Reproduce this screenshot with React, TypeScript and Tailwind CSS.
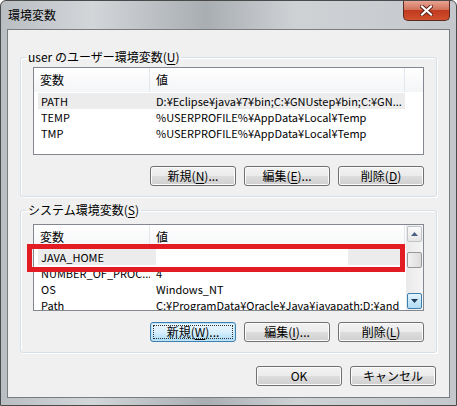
import React from 'react';

const FONT = { fontFamily: '"Noto Sans CJK JP", "Liberation Sans", sans-serif' };

interface Row {
  name: string;
  value: string;
  selected?: boolean;
  redacted?: boolean;
}

const USER_ROWS: Row[] = [
  { name: 'PATH', value: 'D:¥Eclipse¥java¥7¥bin;C:¥GNUstep¥bin;C:¥GN...', selected: true },
  { name: 'TEMP', value: '%USERPROFILE%¥AppData¥Local¥Temp' },
  { name: 'TMP', value: '%USERPROFILE%¥AppData¥Local¥Temp' },
];

const SYSTEM_ROWS: Row[] = [
  { name: 'JAVA_HOME', value: '', selected: true, redacted: true },
  { name: 'NUMBER_OF_PROC...', value: '4' },
  { name: 'OS', value: 'Windows_NT' },
  { name: 'Path', value: 'C:¥ProgramData¥Oracle¥Java¥javapath;D:¥and' },
];

function Label({ text, hot, tail }: { text: string; hot: string; tail?: string }) {
  return (
    <span>
      {text}(<span className="underline underline-offset-[2px]">{hot}</span>){tail}
    </span>
  );
}

function WinButton({ children, focused }: { children: React.ReactNode; focused?: boolean }) {
  if (focused) {
    return (
      <div className="w-[86px] h-[20px] rounded-[3px] border border-[#3c7fb1] bg-gradient-to-b from-[#eaf6fd] via-[#d9f0fc] to-[#a7d9f5] p-[2px] shadow-[inset_0_0_0_1px_#bfe3f7]">
        <div className="h-full w-full border border-dotted border-[#333] flex items-center justify-center text-[12px] leading-none text-black">
          {children}
        </div>
      </div>
    );
  }
  return (
    <div className="w-[86px] h-[20px] rounded-[3px] border border-[#707070] bg-[linear-gradient(to_bottom,#f2f2f2_0%,#ebebeb_50%,#dddddd_51%,#cfcfcf_100%)] shadow-[inset_0_0_0_1px_#fcfcfc] flex items-center justify-center text-[12px] leading-none text-black">
      {children}
    </div>
  );
}

function Header({ tall }: { tall?: boolean }) {
  return (
    <div className={`${tall ? 'h-[24px]' : 'h-[23px]'} flex bg-gradient-to-b from-white to-[#f4f5f7] text-[12px] text-black`}>
      <div className="h-full w-[116px] border-r border-[#e3e8ee] pl-[6px] flex items-center">変数</div>
      <div className="h-full w-[255px] border-r border-[#e3e8ee] pl-[6px] flex items-center">値</div>
      <div className="flex-1" />
    </div>
  );
}

function Rows({ rows }: { rows: Row[] }) {
  return (
    <div className="pt-[1px]">
      {rows.map(r => (
        <div key={r.name} className="h-[16px] flex items-center text-[11px] text-black">
          <div className={`ml-[4px] w-[367px] h-full flex items-center ${r.selected ? 'bg-[#ececec]' : ''}`}>
            <div className="w-[112px] pl-[3px] whitespace-nowrap overflow-hidden">{r.name}</div>
            <div className="flex-1 pl-[6px] whitespace-nowrap overflow-hidden h-full flex items-center">
              {r.redacted ? <div className="w-[192px] h-full bg-white" /> : r.value}
            </div>
          </div>
        </div>
      ))}
    </div>
  );
}

function ScrollArrow({ up, hot }: { up?: boolean; hot?: boolean }) {
  return (
    <div className={`mx-[1px] h-[16px] rounded-[2px] border flex items-center justify-center ${hot ? 'border-[#3c7fb1] bg-gradient-to-b from-[#e3f4fc] to-[#b0dcf5]' : 'border-[#c0c3c8] bg-gradient-to-b from-[#fbfbfb] to-[#e6e6e6]'}`}>
      <svg width="7" height="4" viewBox="0 0 7 4">
        {up ? <path d="M0 4 L3.5 0 L7 4 Z" fill="#4d6185" /> : <path d="M0 0 L3.5 4 L7 0 Z" fill="#1e395b" />}
      </svg>
    </div>
  );
}

function GroupBox({ label, children }: { label: React.ReactNode; children: React.ReactNode }) {
  return (
    <fieldset className="ml-[12px] mr-[15px] border border-[#d5dfe5] rounded-[3px] shadow-[inset_1px_1px_0_#fff,1px_1px_0_#fff] px-[12px] pb-[10px]">
      <legend className="ml-[-7px] px-[2px] text-[12px] leading-[16px] text-black">{label}</legend>
      {children}
    </fieldset>
  );
}

export default function App() {
  return (
    <div style={FONT} className="w-[457px] h-[406px] flex flex-col overflow-hidden border border-[#4a4a4a] rounded-t-[6px] bg-[linear-gradient(to_right,#b9bec3,#d3d6d9_20%,#a9aeb3_45%,#cfd2d5_65%,#c4c8cc)]">
      <div className="h-[28px] flex items-start shrink-0">
        <div className="pl-[7px] pt-[6px] text-[12px] leading-[16px] text-black">環境変数</div>
        <div className="ml-auto mr-[6px] w-[47px] h-[20px] rounded-b-[5px] border border-t-0 border-[#5a2a25] bg-[linear-gradient(to_bottom,#e8a493_0%,#d1735a_45%,#c2391f_50%,#d0512c_100%)] flex items-center justify-center">
          <svg width="13" height="11" viewBox="0 0 13 11">
            <path d="M2 1.5 L11 9.5 M11 1.5 L2 9.5" stroke="#5a1e16" strokeWidth="4" strokeLinecap="square" />
            <path d="M2 1.5 L11 9.5 M11 1.5 L2 9.5" stroke="#ffffff" strokeWidth="2.2" strokeLinecap="square" />
          </svg>
        </div>
      </div>
      <div className="mx-[6px] h-[369px] border border-[#7a7d80] bg-[#f0f0f0] flex flex-col">
        <div className="h-[19px]" />
        <GroupBox label={<><span>user のユーザー環境変数</span>(<span className="underline underline-offset-[2px]">U</span>)</>}>
          <div className="mt-[2px] w-[391px] h-[88px] border border-[#828790] bg-white">
            <Header tall />
            <Rows rows={USER_ROWS} />
          </div>
          <div className="mt-[11px] flex justify-end gap-[8px]">
            <WinButton><Label text="新規" hot="N" tail="..." /></WinButton>
            <WinButton><Label text="編集" hot="E" tail="..." /></WinButton>
            <WinButton><Label text="削除" hot="D" /></WinButton>
          </div>
        </GroupBox>
        <div className="h-[5px]" />
        <GroupBox label={<><span>システム環境変数</span>(<span className="underline underline-offset-[2px]">S</span>)</>}>
          <div className="relative mt-[6px] w-[391px] h-[87px] border border-[#828790] bg-white flex">
            <div className="flex-1 overflow-hidden">
              <Header />
              <Rows rows={SYSTEM_ROWS} />
            </div>
            <div className="w-[17px] h-full flex flex-col bg-gradient-to-r from-[#e9e9e9] to-[#f5f5f5] pt-[1px] pb-[1px]">
              <ScrollArrow up />
              <div className="h-[10px]" />
              <div className="mx-[1px] h-[16px] rounded-[2px] border border-[#979797] bg-gradient-to-r from-[#f2f2f2] to-[#dcdcdc]" />
              <div className="flex-1" />
              <ScrollArrow hot />
            </div>
            <div className="absolute left-[-7px] top-[19px] w-[378px] h-[28px] border-[5px] border-[#e31b23]" />
          </div>
          <div className="mt-[11px] flex justify-end gap-[8px]">
            <WinButton focused><Label text="新規" hot="W" tail="..." /></WinButton>
            <WinButton><Label text="編集" hot="I" tail="..." /></WinButton>
            <WinButton><Label text="削除" hot="L" /></WinButton>
          </div>
        </GroupBox>
        <div className="mt-[13px] mr-[13px] flex justify-end gap-[8px]">
          <WinButton>OK</WinButton>
          <WinButton>キャンセル</WinButton>
        </div>
      </div>
    </div>
  );
}
